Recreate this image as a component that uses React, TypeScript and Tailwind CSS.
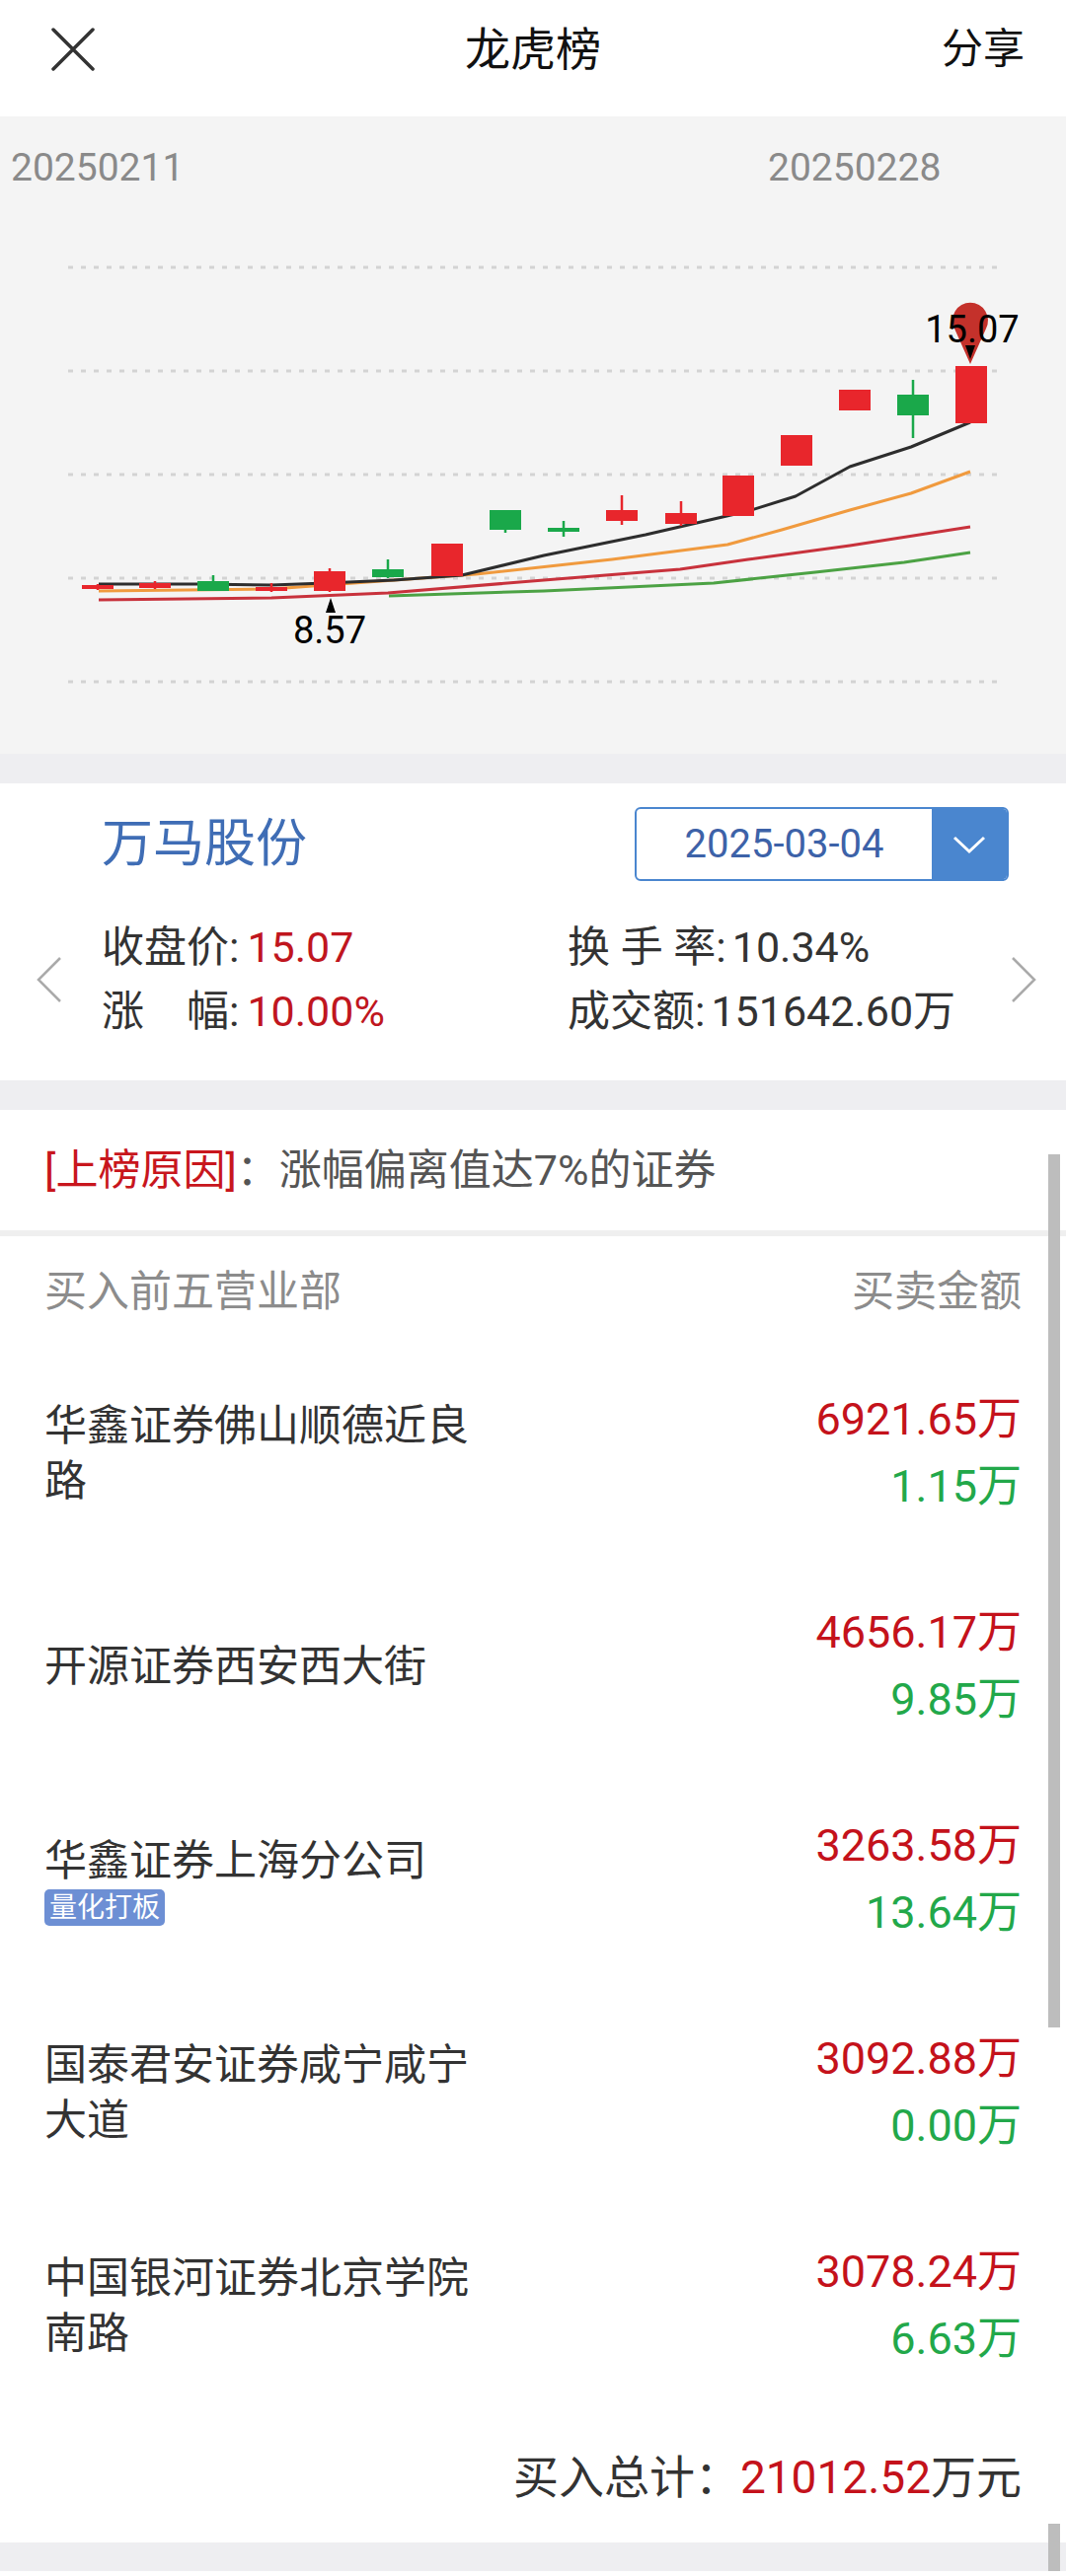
import React from 'react';

type Candle = { x: number; top: number; bottom: number; hi: number; lo: number; up: boolean };

const candles: Candle[] = [
  { x: 83, top: 593, bottom: 597, hi: 592, lo: 598, up: true },
  { x: 141, top: 591, bottom: 596, hi: 589, lo: 597, up: true },
  { x: 200, top: 589, bottom: 599, hi: 583, lo: 599, up: false },
  { x: 259, top: 595, bottom: 599, hi: 591, lo: 600, up: true },
  { x: 318, top: 579, bottom: 599, hi: 576, lo: 600, up: true },
  { x: 377, top: 577, bottom: 585, hi: 567, lo: 586, up: false },
  { x: 437, top: 551, bottom: 584, hi: 551, lo: 584, up: true },
  { x: 496, top: 517, bottom: 537, hi: 517, lo: 540, up: false },
  { x: 555, top: 535, bottom: 539, hi: 528, lo: 544, up: false },
  { x: 614, top: 517, bottom: 528, hi: 502, lo: 532, up: true },
  { x: 674, top: 520, bottom: 531, hi: 508, lo: 533, up: true },
  { x: 732, top: 482, bottom: 523, hi: 482, lo: 523, up: true },
  { x: 791, top: 441, bottom: 472, hi: 441, lo: 472, up: true },
  { x: 850, top: 395, bottom: 416, hi: 395, lo: 416, up: true },
  { x: 909, top: 400, bottom: 421, hi: 385, lo: 444, up: false },
  { x: 968, top: 371, bottom: 429, hi: 371, lo: 429, up: true },
];

const ma5 = '100,592 200,592 275,593 330,591 399,588 468,583 551,563 654,542 758,518 806,503 861,473 923,453 983,428';
const ma10 = '100,599 275,597 386,589 482,582 620,567 737,552 792,537 861,517 923,500 983,478';
const ma20 = '100,608 275,606 393,601 551,588 689,577 758,567 861,553 983,534';
const ma30 = '394,604 551,599 723,591 826,580 916,570 983,560';

const rows = [
  { name: '华鑫证券佛山顺德近良路', buy: '6921.65万', sell: '1.15万' },
  { name: '开源证券西安西大街', buy: '4656.17万', sell: '9.85万' },
  { name: '华鑫证券上海分公司', buy: '3263.58万', sell: '13.64万', tag: '量化打板' },
  { name: '国泰君安证券咸宁咸宁大道', buy: '3092.88万', sell: '0.00万' },
  { name: '中国银河证券北京学院南路', buy: '3078.24万', sell: '6.63万' },
];

function KChart() {
  return (
    <svg width="1080" height="546" viewBox="0 218 1080 546" className="block">
      {[271, 376, 481, 586, 691].map((y) => (
        <line key={y} x1="69" x2="1011" y1={y} y2={y} stroke="#d3d3d3" strokeWidth="3" strokeDasharray="5 8" />
      ))}
      <polyline points={ma30} fill="none" stroke="#4ca244" strokeWidth="3" strokeLinejoin="round" />
      <polyline points={ma20} fill="none" stroke="#c8323c" strokeWidth="3" strokeLinejoin="round" />
      <polyline points={ma10} fill="none" stroke="#f09a3e" strokeWidth="3" strokeLinejoin="round" />
      <polyline points={ma5} fill="none" stroke="#2d2d2d" strokeWidth="3" strokeLinejoin="round" />
      {candles.map((c, i) => {
        const color = c.up ? '#e8262c' : '#1aa84a';
        return (
          <g key={i}>
            <line x1={c.x + 16} x2={c.x + 16} y1={c.hi} y2={c.lo} stroke={color} strokeWidth="2.5" />
            <rect x={c.x} y={c.top} width="32" height={Math.max(c.bottom - c.top, 3)} fill={color} />
          </g>
        );
      })}
      {/* high marker */}
      <path d="M983 369 L967 333 A18 18 0 1 1 999 333 Z" fill="#c4312b" />
      <text x="985" y="347" textAnchor="middle" fontSize="38" fill="#000" fontFamily="Roboto">15.07</text>
      <path d="M978 350 L988 350 L983 364 Z" fill="#000" />
      {/* low marker */}
      <path d="M335 606 L340 621 L330 621 Z" fill="#000" />
      <text x="334" y="652" textAnchor="middle" fontSize="38" fill="#000" fontFamily="Roboto">8.57</text>
    </svg>
  );
}

export default function App() {
  return (
    <div className="relative w-[1080px] bg-white text-[#333] font-[Roboto,'Noto_Sans_CJK_SC',sans-serif]">
      {/* Header */}
      <div className="grid grid-cols-3 items-center h-[118px] pb-[18px]">
        <div className="pl-[52px]">
          <svg width="44" height="44" viewBox="0 0 44 44" className="block">
            <path d="M2 2 L42 42 M42 2 L2 42" stroke="#333" strokeWidth="3.5" strokeLinecap="round" />
          </svg>
        </div>
        <div className="text-center text-[46px] text-[#111] leading-none">龙虎榜</div>
        <div className="text-right pr-[42px] text-[42px] text-[#111] leading-none">分享</div>
      </div>

      {/* Chart */}
      <div className="h-[646px] bg-[#f4f4f4] flex flex-col">
        <div className="flex h-[100px] pt-[29px] text-[39px] leading-[46px] text-[#8a8a8a]">
          <span className="w-[778px] pl-[11px]">20250211</span>
          <span>20250228</span>
        </div>
        <KChart />
      </div>

      <div className="h-[30px] bg-[#eeeef1]" />

      {/* Stock info */}
      <div className="h-[301px] bg-white pt-[24px]">
        <div className="flex items-center h-[75px]">
          <div className="pl-[103px] text-[52px] leading-none text-[#3f6db5]">万马股份</div>
          <div className="ml-auto mr-[58px] flex w-[379px] h-[75px] rounded-[6px] border-2 border-[#4a86cf] overflow-hidden">
            <div className="flex-1 flex items-center justify-center text-[40px] text-[#3d62a8]">2025-03-04</div>
            <div className="w-[76px] bg-[#4a86cf] flex items-center justify-center">
              <svg width="34" height="20" viewBox="0 0 34 20">
                <path d="M2 3 L17 17 L32 3" fill="none" stroke="#fff" strokeWidth="3" />
              </svg>
            </div>
          </div>
        </div>
        <div className="flex items-center mt-[35px]">
          <div className="w-[103px] pl-[36px]">
            <svg width="28" height="46" viewBox="0 0 28 46" className="block">
              <path d="M25 1 L3 23 L25 45" fill="none" stroke="#aaa" strokeWidth="2.5" />
            </svg>
          </div>
          <div className="w-[472px] text-[43px] leading-[65px]">
            <div>收盘价:<span className="ml-[8px] text-[#c0161e]">15.07</span></div>
            <div>涨　幅:<span className="ml-[8px] text-[#c0161e]">10.00%</span></div>
          </div>
          <div className="w-[448px] text-[43px] leading-[65px]">
            <div>换 手 率:<span className="ml-[6px]">10.34%</span></div>
            <div>成交额:<span className="ml-[6px]">151642.60万</span></div>
          </div>
          <svg width="28" height="46" viewBox="0 0 28 46" className="block">
            <path d="M3 1 L25 23 L3 45" fill="none" stroke="#aaa" strokeWidth="2.5" />
          </svg>
        </div>
      </div>

      <div className="h-[30px] bg-[#eeeef1]" />

      {/* Reason */}
      <div className="h-[122px] flex items-center pl-[45px] text-[43px]">
        <span className="text-[#c8161d]">[上榜原因]</span>
        <span className="text-[#555]">：涨幅偏离值达7%的证券</span>
      </div>
      <div className="h-[6px] bg-[#efefef]" />

      {/* Table header */}
      <div className="h-[112px] flex items-center justify-between px-[45px] text-[43px] text-[#8c8c8c]">
        <span>买入前五营业部</span>
        <span>买卖金额</span>
      </div>

      {rows.map((r) => (
        <div key={r.name} className="h-[216px] flex items-center justify-between px-[45px]">
          <div className="w-[450px]">
            <div className="text-[43px] leading-[56px] text-[#333]">{r.name}</div>
            {r.tag && (
              <span className="inline-block mt-[1px] px-[5px] rounded-[5px] bg-[#6d8fd4] text-white text-[28px] leading-[37px]">
                {r.tag}
              </span>
            )}
          </div>
          <div className="text-right text-[45px] leading-[68px]">
            <div className="text-[#c4121b]">{r.buy}</div>
            <div className="text-[#22a84a]">{r.sell}</div>
          </div>
        </div>
      ))}

      {/* Total */}
      <div className="h-[132px] flex items-center justify-end pr-[45px] text-[46px]">
        <span>买入总计：</span>
        <span className="text-[#c4121b]">21012.52</span>
        <span>万元</span>
      </div>

      <div className="h-[29px] bg-[#eeeef1]" />
      <div className="h-[5px] bg-white" />

      {/* scrollbars */}
      <div className="absolute left-[1062px] top-[1170px] w-[12px] h-[885px] bg-[#bdbdbd]" />
      <div className="absolute left-[1062px] top-[2558px] w-[12px] h-[48px] bg-[#bdbdbd]" />
    </div>
  );
}
